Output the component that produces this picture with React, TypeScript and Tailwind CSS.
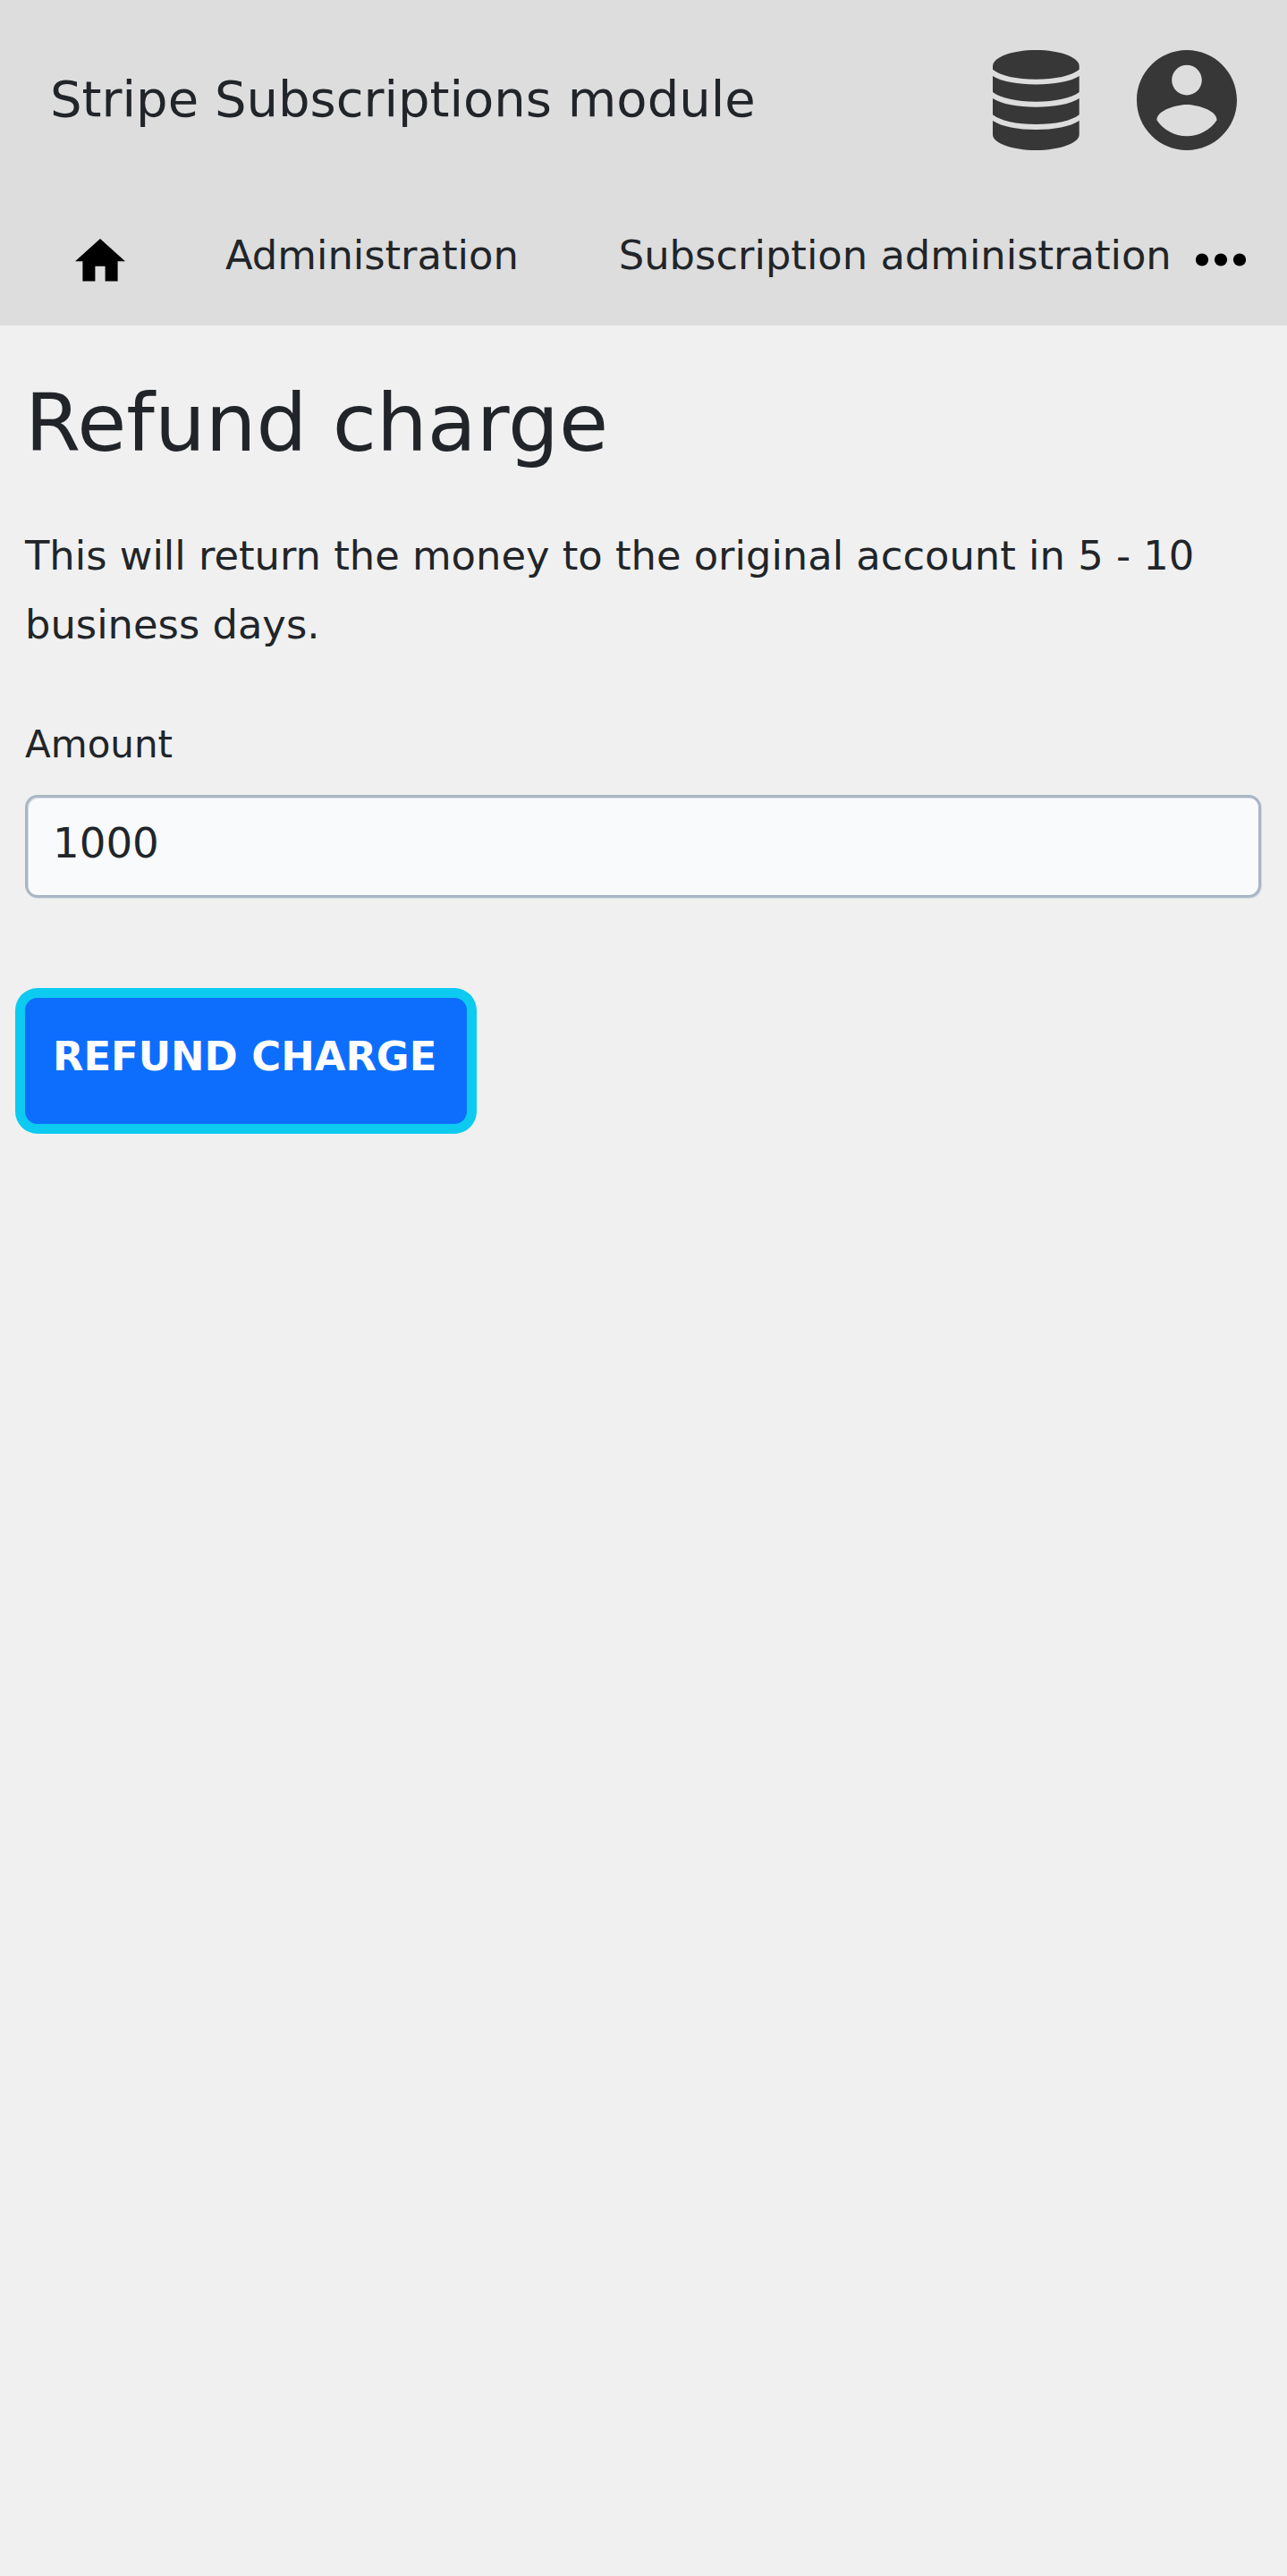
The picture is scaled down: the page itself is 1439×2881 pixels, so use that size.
import React from "react";

function DatabaseIcon() {
  return (
    <svg className="h-[112px] w-[97px]" viewBox="0 0 97 112" fill="#373737">
      <path d="M0 18C0 8 21.500 0 48.300 0S96.700 8 96.700 18V21.700C88 28.700 70 32.700 48.300 32.700S8.700 28.700 0 21.700Z" />
      <path d="M0 29C10 35.300 28 38.400 48.300 38.400S86.700 35.300 96.700 29V47C88 53.700 70 57.700 48.300 57.700S8.700 53.700 0 47Z" />
      <path d="M0 54C10 60.500 28 63.700 48.300 63.700S86.700 60.500 96.700 54V72.200C88 79 70 83 48.300 83S8.700 79 0 72.200Z" />
      <path d="M0 79C10 85.700 28 89 48.300 89S86.700 85.700 96.700 79V94.500C96.700 104 75 112 48.300 112S0 104 0 94.500Z" />
    </svg>
  );
}

function AccountIcon() {
  return (
    <svg className="h-[112px] w-[112px]" viewBox="2 2 20 20" fill="#373737">
      <path d="M12 2C6.48 2 2 6.48 2 12s4.480 10 10 10 10-4.480 10-10S17.520 2 12 2zm0 3c1.660 0 3 1.340 3 3s-1.340 3-3 3-3-1.340-3-3 1.340-3 3-3zm0 14.200c-2.500 0-4.710-1.280-6-3.220.03-1.990 4-3.080 6-3.080 1.990 0 5.970 1.090 6 3.080-1.290 1.940-3.500 3.220-6 3.220z" />
    </svg>
  );
}

export default function App() {
  return (
    <div className="min-h-[2881px] bg-[#f0f0f0] font-['DejaVu_Sans',sans-serif] text-[#212529]">
      <header className="h-[364px] bg-[#dddddd]">
        <div className="flex h-[224px] items-center justify-between px-14">
          <span className="whitespace-nowrap pb-[3px] text-[56px] leading-[84px]">Stripe Subscriptions module</span>
          <div className="flex items-center gap-16">
            <DatabaseIcon />
            <AccountIcon />
          </div>
        </div>
        <nav className="flex items-start pl-[84px] pr-[46px] pt-7 text-[44.800px] leading-[67px]">
          <svg className="mt-[15px] h-[47.600px] w-[56px] shrink-0" viewBox="2 3 20 17">
            <path d="M10 20v-6h4v6h5v-8h3L12 3 2 12h3v8z" />
          </svg>
          <a className="ml-28">Administration</a>
          <a className="ml-28 whitespace-nowrap">Subscription administration</a>
          <svg className="ml-auto mt-[31px] h-[15px] w-[56px] shrink-0" viewBox="0 0 56 15">
            <circle cx="7" cy="7.500" r="7.100" />
            <circle cx="28" cy="7.500" r="7.100" />
            <circle cx="49" cy="7.500" r="7.100" />
          </svg>
        </nav>
      </header>
      <main className="px-7 pt-14">
        <h1 className="text-[89.600px] leading-[106px]">Refund charge</h1>
        <p className="mt-[57px] text-[44.800px] leading-[77px]">
          This will return the money to the original account in 5 - 10 business days.
        </p>
        <label htmlFor="amount" className="mt-16 block text-[42px] leading-[63px]">Amount</label>
        <input
          id="amount"
          type="text"
          defaultValue="1000"
          className="mt-[25px] block h-[115px] w-[1382px] rounded-[14px] border-3 border-[#a9b6c4] bg-[#f8fafc] px-7 pb-[7px] text-[46.700px] shadow-[inset_1px_1px_0_#d3dae1,1px_1px_0_#d3dae1] outline-none"
        />
        <button className="mt-28 flex h-[141px] w-[494px] items-start whitespace-nowrap rounded-[14px] bg-[#0d6efd] pl-[31px] pt-8 text-[44.800px] font-bold leading-[67px] text-white ring-[11px] ring-[#0dcaf0]">
          REFUND CHARGE
        </button>
      </main>
    </div>
  );
}
